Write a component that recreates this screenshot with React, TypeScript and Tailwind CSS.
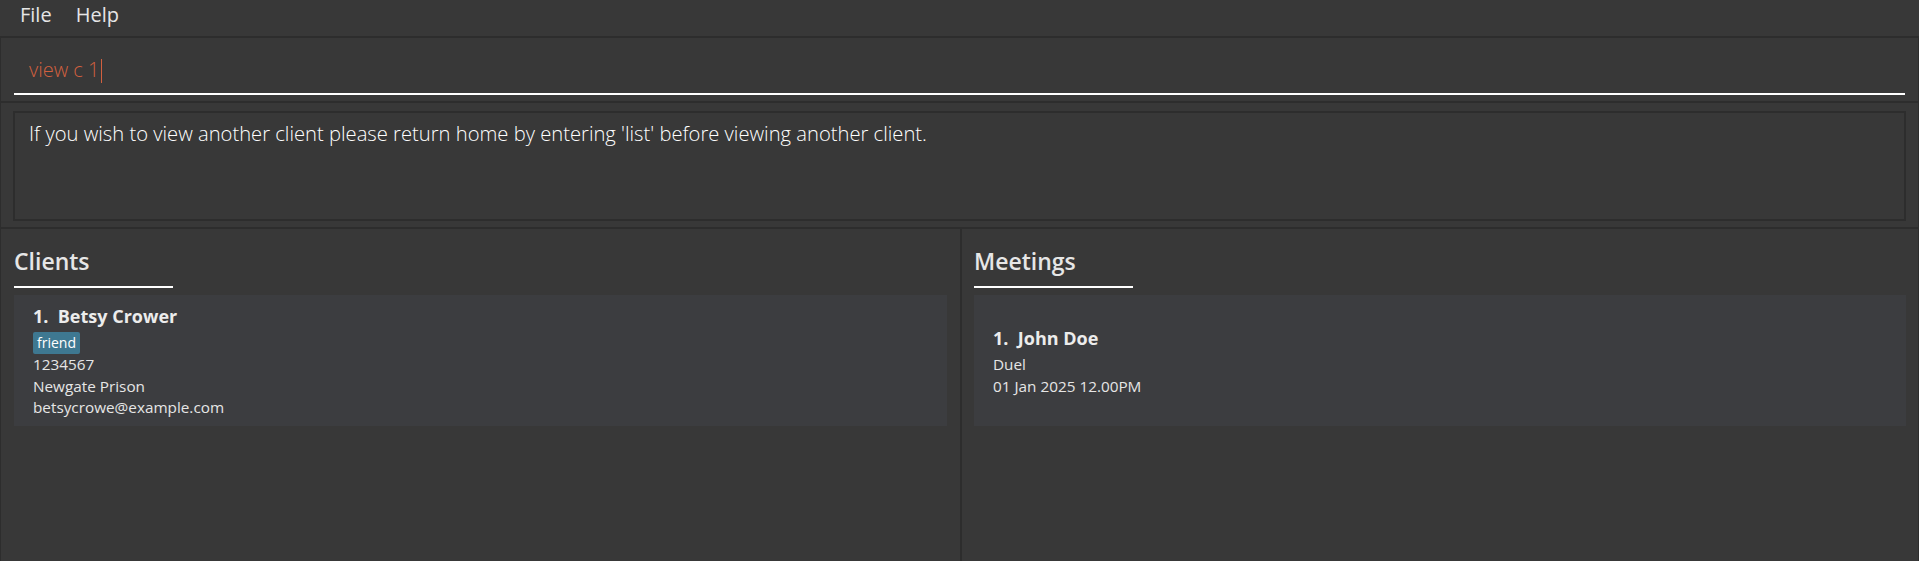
import React from "react";

const font = { fontFamily: '"Open Sans", "Noto Sans", sans-serif' };

export default function App() {
  return (
    <div
      className="w-[1919px] h-[561px] bg-[#383838] flex flex-col overflow-hidden text-[#e8e8e8]"
      style={font}
    >
      {/* Menu bar */}
      <div className="h-[38px] shrink-0 flex items-center border-b-2 border-[#2d2d2d] pl-[20px] gap-[24px] text-[20px] text-[#e6e6e6]">
        <span className="leading-none -mt-[6px]">File</span>
        <span className="leading-none -mt-[6px]">Help</span>
      </div>

      {/* Command box */}
      <div className="h-[65px] shrink-0 border-b-2 border-[#2d2d2d] border-x border-x-[#2d2d2d] px-[13px] pt-[16px]">
        <div className="h-[41px] border-b-2 border-white flex items-start pl-[15px] pt-[2px]">
          <span className="text-[20px] font-light text-[#d2603f] leading-[28px]">view c 1</span>
          <span className="w-[1px] h-[24px] bg-[#d2603f] ml-[2px] mt-[3px]" />
        </div>
      </div>

      {/* Result display */}
      <div className="h-[126px] shrink-0 border-b-2 border-[#2d2d2d] border-x border-x-[#2d2d2d] px-[12px] pt-[8px]">
        <div className="h-[110px] border-2 border-[#2d2d2d] pl-[14px] pt-[6px]">
          <p className="text-[20.2px] font-light text-white leading-[28px]">
            If you wish to view another client please return home by entering 'list' before viewing another client.
          </p>
        </div>
      </div>

      {/* Panels */}
      <div className="flex-1 flex border-x border-[#2d2d2d]">
        <div className="w-[959px] shrink-0 pl-[13px] pr-[13px]">
          <h2 className="text-[23px] font-semibold leading-[32px] mt-[16px] text-[#e6e6e6]">Clients</h2>
          <div className="w-[159px] h-[2px] bg-white mt-[9px]" />
          <div className="mt-[7px] h-[131px] bg-[#3c3d40] pl-[19px] pt-[9px]">
            <div className="text-[18px] font-bold leading-[24px] text-[#ececec]">
              1.&nbsp;&nbsp;Betsy Crower
            </div>
            <div className="mt-[2px]">
              <span className="inline-block h-[22px] px-[4px] rounded-[2px] bg-[#3e7891] text-[14px] leading-[22px] text-white">
                friend
              </span>
            </div>
            <div className="text-[15.3px] leading-[21.5px] text-[#e6e6e6]">1234567</div>
            <div className="text-[15.3px] leading-[21.5px] text-[#e6e6e6]">Newgate Prison</div>
            <div className="text-[15.3px] leading-[21.5px] text-[#e6e6e6]">betsycrowe@example.com</div>
          </div>
        </div>
        <div className="w-[2px] shrink-0 bg-[#2d2d2d]" />
        <div className="flex-1 pl-[12px] pr-[12px]">
          <h2 className="text-[23px] font-semibold leading-[32px] mt-[16px] text-[#e6e6e6]">Meetings</h2>
          <div className="w-[159px] h-[2px] bg-white mt-[9px]" />
          <div className="mt-[7px] h-[131px] bg-[#3c3d40] pl-[19px] pt-[31px]">
            <div className="text-[18px] font-bold leading-[24px] text-[#ececec]">
              1.&nbsp;&nbsp;John Doe
            </div>
            <div className="mt-[4px] text-[15.3px] leading-[21.5px] text-[#e6e6e6]">Duel</div>
            <div className="text-[15.3px] leading-[21.5px] text-[#e6e6e6]">01 Jan 2025 12.00PM</div>
          </div>
        </div>
      </div>
    </div>
  );
}
